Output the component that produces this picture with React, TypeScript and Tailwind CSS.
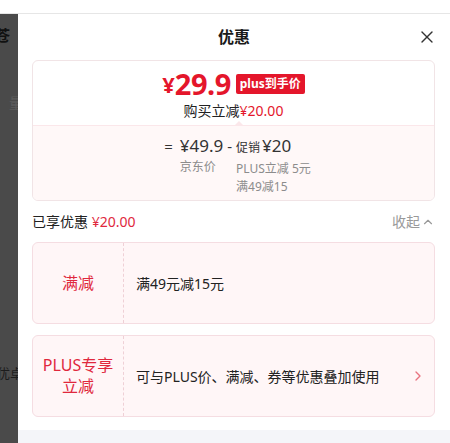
import { X, ChevronUp, ChevronRight } from 'lucide-react'

const font = { fontFamily: '"Noto Sans", "Noto Sans CJK SC", sans-serif' }

function Coupon({ label, desc, arrow }: { label: string[]; desc: string; arrow?: boolean }) {
  return (
    <div className="flex h-[82px] rounded-[6px] border border-[#f5dde2] bg-[#fff6f7]">
      <div className="flex w-[91px] shrink-0 flex-col items-center justify-center border-r border-dashed border-[#efd0d6] text-[16px] leading-[21px] text-[#e0283d]">
        {label.map((l) => (
          <div key={l}>{l}</div>
        ))}
      </div>
      <div className="flex flex-1 items-center pl-[12px] pr-[8px] text-[14px] text-[#222]">
        <span className="flex-1">{desc}</span>
        {arrow && <ChevronRight className="h-[16px] w-[16px] text-[#e8737f]" strokeWidth={2} />}
      </div>
    </div>
  )
}

export default function App() {
  return (
    <div className="h-[443px] w-[450px] overflow-hidden bg-white" style={font}>
      {/* page behind the sheet */}
      <div className="h-[14px] border-b border-[#e6e6e6] bg-white"></div>

      <div className="flex h-[429px]">
        <div className="flex w-[18px] shrink-0 flex-col overflow-hidden bg-[#4a4a4a]">
          <div className="mt-[13px] -ml-[5px] text-[15px] font-bold leading-[16px] text-[#111]">苍</div>
          <div className="mt-[52px] ml-[9px] text-[14px] leading-[16px] text-[#5c5c5c]">量</div>
          <div className="mt-[254px] -ml-[3px] whitespace-nowrap text-[13px] leading-[16px] text-[#1c1c1c]">优卓</div>
        </div>

        {/* sheet */}
        <div className="flex flex-1 flex-col bg-white">
          <div className="relative flex h-[46px] items-center justify-center">
            <span className="text-[16px] font-bold text-[#1a1a1a]">优惠</span>
            <X className="absolute right-[13px] top-[13px] h-[20px] w-[20px] text-[#333]" strokeWidth={1.6} />
          </div>

          <div className="pl-[14px] pr-[15px]">
            {/* price card */}
            <div className="overflow-hidden rounded-[6px] border border-[#f1e4e6]">
              <div className="flex h-[64px] flex-col items-center pt-[6px]">
                <div className="flex items-center">
                  <span className="text-[22px] font-bold leading-none text-[#e4162b]">¥</span>
                  <span className="text-[29px] font-bold leading-[34px] tracking-[-0.5px] text-[#e4162b]">29.9</span>
                  <span className="ml-[5px] rounded-[2px] bg-[#e4162b] px-[4px] text-[12px] font-bold leading-[20px] text-white">plus到手价</span>
                </div>
                <div className="mt-[1px] text-[14px] leading-[18px] text-[#222]">
                  购买立减<span className="text-[#e4162b]">¥20.00</span>
                </div>
              </div>
              <div className="relative h-[75px] border-t border-[#fbe7ea] bg-[#fff8f8]">
                <div className="absolute -top-[5px] left-[201px] h-0 w-0 border-x-[5px] border-b-[5px] border-x-transparent border-b-[#fbe7ea]"></div>
                <div className="flex justify-center pl-[8px] pt-[8px]">
                  <span className="mr-[7px] text-[15px] leading-[24px] text-[#333]">=</span>
                  <div className="flex flex-col">
                    <span className="text-[17px] leading-[24px] text-[#333]">¥49.9</span>
                    <span className="text-[12px] leading-[18px] text-[#8c8c8c]">京东价</span>
                  </div>
                  <span className="mx-[4px] text-[15px] leading-[24px] text-[#333]">-</span>
                  <div className="flex flex-col">
                    <span className="leading-[24px] text-[#333]">
                      <span className="text-[12px]">促销</span>
                      <span className="ml-[2px] text-[17px]">¥20</span>
                    </span>
                    <span className="text-[12px] leading-[18px] text-[#8c8c8c]">PLUS立减 5元</span>
                    <span className="text-[12px] leading-[18px] text-[#8c8c8c]">满49减15</span>
                  </div>
                </div>
              </div>
            </div>

            <div className="flex h-[41px] items-center justify-between">
              <span className="text-[14px] text-[#222]">
                已享优惠 <span className="text-[#e0283d]">¥20.00</span>
              </span>
              <span className="flex items-center text-[14px] text-[#999]">
                收起
                <ChevronUp className="ml-[1px] h-[14px] w-[14px]" strokeWidth={2} />
              </span>
            </div>

            <div className="flex flex-col gap-[11px]">
              <Coupon label={['满减']} desc="满49元减15元" />
              <Coupon label={['PLUS专享', '立减']} desc="可与PLUS价、满减、券等优惠叠加使用" arrow />
            </div>
          </div>

          <div className="mt-auto h-[13px] bg-[#f4f5f9]"></div>
        </div>
      </div>
    </div>
  )
}
